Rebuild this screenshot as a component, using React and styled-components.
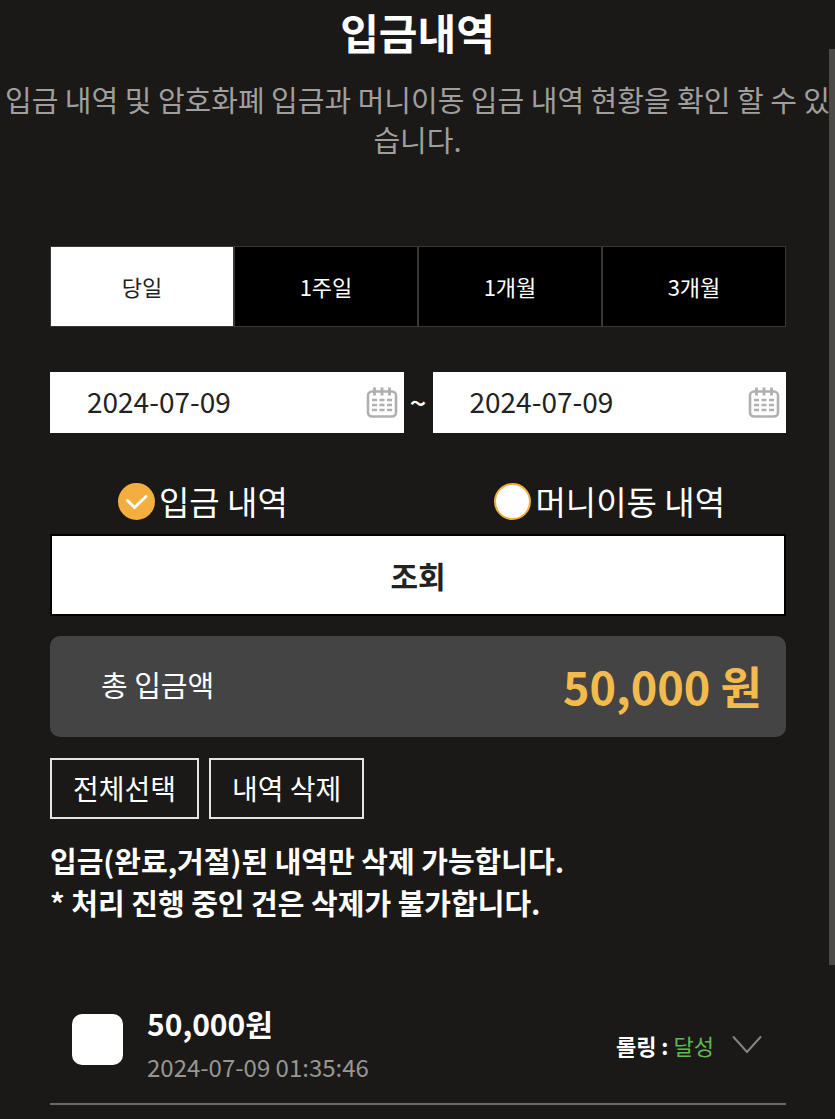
import React, { useState } from "react";
import styled, { createGlobalStyle } from "styled-components";

const GlobalStyle = createGlobalStyle`
  *, *::before, *::after { box-sizing: border-box; }
  body {
    margin: 0;
    background: #1a1917;
    color: #fff;
    font-family: "Noto Sans CJK KR", "Noto Sans", sans-serif;
  }
  button, input { font-family: inherit; margin: 0; }
  button { cursor: pointer; }
`;

const Page = styled.main`
  position: relative;
  min-height: 100vh;
  overflow: hidden;
`;

const ScrollThumb = styled.div`
  position: absolute;
  top: 49px;
  right: 0;
  width: 6px;
  height: 916px;
  background: #4b4a49;
`;

const Header = styled.header`
  text-align: center;
`;

const Title = styled.h1`
  margin: 0;
  padding-top: 2px;
  font-size: 42px;
  line-height: 60px;
  font-weight: 700;
`;

const Description = styled.p`
  margin: 17px 0 0;
  font-size: 29px;
  line-height: 40px;
  color: #a09f9e;
`;

const Content = styled.div`
  display: flex;
  flex-direction: column;
  margin: 87px 49px 0 50px;
`;

const Tabs = styled.div`
  display: grid;
  grid-template-columns: repeat(4, 1fr);
`;

const Tab = styled.button`
  height: 81px;
  padding: 0 0 2px;
  border: 1px solid #383838;
  background: ${(p) => (p.$active ? "#fff" : "#000")};
  color: ${(p) => (p.$active ? "#222" : "#fff")};
  font-size: 22px;
  line-height: 32px;
`;

const DateRange = styled.div`
  display: flex;
  align-items: center;
  margin-top: 45px;
`;

const DateField = styled.div`
  flex: 1;
  min-width: 0;
  height: 61px;
  display: flex;
  align-items: center;
  padding: 0 6px 0 37px;
  background: #fff;
`;

const DateInput = styled.input`
  flex: 1;
  min-width: 0;
  height: 46px;
  padding: 0 0 4px;
  border: 0;
  background: transparent;
  color: #222;
  font-size: 28px;
  line-height: 42px;
`;

const IconButton = styled.button`
  display: flex;
  padding: 0;
  border: 0;
  background: transparent;
`;

const Tilde = styled.span`
  width: 29px;
  padding-bottom: 4px;
  text-align: center;
  font-size: 29px;
  line-height: 42px;
  font-weight: 500;
`;

const Choices = styled.div`
  display: flex;
  justify-content: space-between;
  margin-top: 44px;
  padding: 0 61px 0 68px;
`;

const Choice = styled.label`
  display: flex;
  align-items: center;
  gap: 4px;
  font-size: 33px;
  line-height: 48px;
  cursor: pointer;
`;

const RadioMark = styled.span`
  display: grid;
  place-items: center;
  > * { grid-area: 1 / 1; }
  svg { pointer-events: none; }
`;

const Radio = styled.input`
  appearance: none;
  width: 37px;
  height: 37px;
  border: 2px solid #f3ae3d;
  border-radius: 50%;
  background: #fff;
  &:checked { background: #f3ae3d; }
`;

const SearchButton = styled.button`
  height: 82px;
  margin-top: 9px;
  border: 2px solid #000;
  background: #fff;
  color: #222;
  font-size: 30px;
  line-height: 44px;
  font-weight: 700;
`;

const Total = styled.section`
  display: flex;
  align-items: center;
  justify-content: space-between;
  height: 101px;
  margin-top: 20px;
  padding: 0 24px 2px 51px;
  border-radius: 10px;
  background: #444;
`;

const TotalLabel = styled.span`
  padding-bottom: 4px;
  font-size: 29px;
  line-height: 42px;
`;

const TotalAmount = styled.strong`
  font-size: 45px;
  line-height: 64px;
  font-weight: 700;
  color: #f3bb4e;
`;

const Actions = styled.div`
  display: flex;
  gap: 10px;
  margin-top: 21px;
`;

const ActionButton = styled.button`
  height: 61px;
  padding: 0 21px 2px;
  border: 2px solid #e4e4e4;
  background: transparent;
  color: #fff;
  font-size: 28px;
  line-height: 42px;
`;

const Notice = styled.p`
  margin: 20px 0 0;
  font-size: 29px;
  line-height: 42px;
  font-weight: 700;
`;

const History = styled.ul`
  margin: 76px 0 0;
  padding: 0;
  list-style: none;
`;

const HistoryItem = styled.li`
  display: flex;
  align-items: center;
  height: 106px;
  padding: 0 24px 12px 22px;
  border-bottom: 2px solid #6a6968;
`;

const ItemCheck = styled.input`
  appearance: none;
  flex: none;
  align-self: flex-start;
  width: 51px;
  height: 51px;
  && { margin-top: 15px; }
  border-radius: 10px;
  background: #fff;
  &:checked { background: #f3ae3d; }
`;

const ItemInfo = styled.div`
  display: flex;
  flex-direction: column;
  flex: 1;
  margin-left: 24px;
`;

const ItemAmount = styled.strong`
  font-size: 30px;
  line-height: 44px;
`;

const ItemTime = styled.time`
  font-size: 24px;
  line-height: 44px;
  color: #979695;
`;

const Rolling = styled.span`
  margin-right: 18px;
  font-size: 22px;
  line-height: 32px;
  font-weight: 700;
`;

const RollingState = styled.span`
  font-weight: 400;
  color: #63b750;
`;

const CalendarIcon = () => (
  <svg width="32" height="32" viewBox="0 0 32 32" fill="none" stroke="#b0b0b0" aria-hidden="true">
    <rect x="2" y="4.500" width="28" height="25" rx="4" strokeWidth="2.6" />
    <path d="M8.500 0.500v8M16 0.500v8M23.500 0.500v8" strokeWidth="2.800" />
    <path d="M6 13h5M13.500 13h5M21 13h5M6 18h5M13.500 18h5M21 18h5M6 23h5M13.500 23h5M21 23h5" strokeWidth="2.600" />
  </svg>
);

const PERIODS = ["당일", "1주일", "1개월", "3개월"];
const KINDS = ["입금 내역", "머니이동 내역"];

function DatePick({ label }) {
  return (
    <DateField>
      <DateInput type="text" aria-label={label} defaultValue="2024-07-09" />
      <IconButton type="button" aria-label={`${label} 선택`}>
        <CalendarIcon />
      </IconButton>
    </DateField>
  );
}

export default function App() {
  const [period, setPeriod] = useState(PERIODS[0]);
  const [kind, setKind] = useState(KINDS[0]);

  return (
    <Page>
      <GlobalStyle />
      <Header>
        <Title>입금내역</Title>
        <Description>
          입금 내역 및 암호화폐 입금과 머니이동 입금 내역 현황을 확인 할 수 있습니다.
        </Description>
      </Header>
      <Content>
        <Tabs>
          {PERIODS.map((name) => (
            <Tab key={name} type="button" $active={name === period} onClick={() => setPeriod(name)}>
              {name}
            </Tab>
          ))}
        </Tabs>
        <DateRange>
          <DatePick label="시작일" />
          <Tilde>~</Tilde>
          <DatePick label="종료일" />
        </DateRange>
        <Choices>
          {KINDS.map((name) => (
            <Choice key={name}>
              <RadioMark>
                <Radio type="radio" name="kind" checked={name === kind} onChange={() => setKind(name)} />
                {name === kind && (
                  <svg width="37" height="37" viewBox="0 0 37 37" fill="none" aria-hidden="true">
                    <path d="M9.500 17.500l7 7 11.500-11" stroke="#fff" strokeWidth="3" strokeLinecap="round" />
                  </svg>
                )}
              </RadioMark>
              {name}
            </Choice>
          ))}
        </Choices>
        <SearchButton type="button">조회</SearchButton>
        <Total>
          <TotalLabel>총 입금액</TotalLabel>
          <TotalAmount>50,000 원</TotalAmount>
        </Total>
        <Actions>
          <ActionButton type="button">전체선택</ActionButton>
          <ActionButton type="button">내역 삭제</ActionButton>
        </Actions>
        <Notice>
          입금(완료,거절)된 내역만 삭제 가능합니다.
          <br />* 처리 진행 중인 건은 삭제가 불가합니다.
        </Notice>
        <History>
          <HistoryItem>
            <ItemCheck type="checkbox" aria-label="50,000원 내역 선택" />
            <ItemInfo>
              <ItemAmount>50,000원</ItemAmount>
              <ItemTime>2024-07-09 01:35:46</ItemTime>
            </ItemInfo>
            <Rolling>
              롤링 : <RollingState>달성</RollingState>
            </Rolling>
            <IconButton type="button" aria-label="상세 보기">
              <svg width="30" height="20" viewBox="0 0 30 20" fill="none" aria-hidden="true">
                <path d="M1.500 2L15 17 28.500 2" stroke="#858483" strokeWidth="2" strokeLinecap="round" />
              </svg>
            </IconButton>
          </HistoryItem>
        </History>
      </Content>
      <ScrollThumb />
    </Page>
  );
}
